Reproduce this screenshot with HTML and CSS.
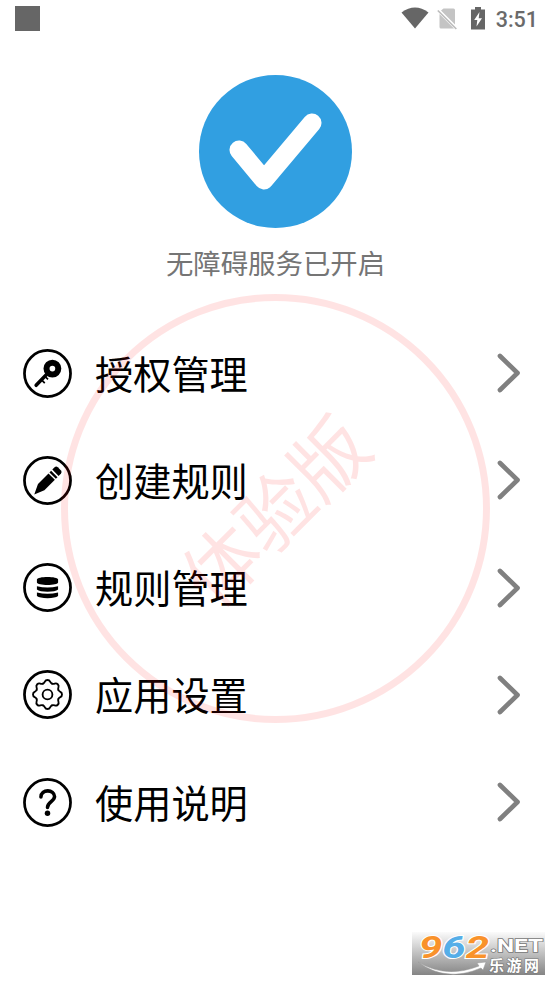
FILE: index.html
```html
<!DOCTYPE html>
<html lang="zh-CN">
<head>
<meta charset="utf-8">
<title>无障碍服务</title>
<link rel="stylesheet" href="styles.css">
</head>
<body>
<div class="screen">
  <header class="status-bar">
    <span class="notice"></span>
    <div class="status-icons">
      <svg class="wifi" width="28" height="22" viewBox="0 0 28 22"><path d="M.5 5.500Q14-4.500 27.500 5.500L14 21.500Z"/></svg>
      <svg class="sim" width="20" height="22" viewBox="0 0 20 22"><path d="M6.500 .5H16.500Q18 .5 18 2V16.500L4 2.500ZM2.500 6L17 20.500H4Q2.500 20.500 2.500 19Z"/><path class="slash" d="M.8 2.500L19.300 21"/></svg>
      <svg class="battery" width="14" height="23" viewBox="0 0 14 23"><path d="M4 0H10V2.500H14V22.500H0V2.500H4Z"/><path class="bolt" d="M8.500 5L3.200 13H6.300L5.500 19.500L11 11.200H7.700Z"/></svg>
      <span class="clock">3:51</span>
    </div>
  </header>

  <section class="service">
    <svg width="153" height="154" viewBox="0 0 153 154"><circle cx="76.500" cy="76.500" r="76.500"/><path d="M40 75L65 105L113 48"/></svg>
    <p>无障碍服务已开启</p>
  </section>

  <nav class="menu">
    <a class="row">
      <svg class="icon" viewBox="0 0 50 50"><circle class="ring" cx="25" cy="25" r="23.500"/><circle cx="30" cy="20" r="6" fill="none" stroke="#000" stroke-width="6.200"/><path d="M26 24L13.400 37" stroke="#000" stroke-width="3.600" stroke-linecap="round"/><path d="M18.500 31L22.200 34.700M22.500 28L25.500 31" stroke="#000" stroke-width="1.800"/></svg>
      <span>授权管理</span>
      <svg class="arrow" viewBox="0 0 24 40"><path d="M3 3L20.500 20L3 37"/></svg>
    </a>
    <a class="row">
      <svg class="icon" viewBox="0 0 50 50"><circle class="ring" cx="25" cy="25" r="23.500"/><path d="M11.500 39.300L15.300 28.500L26 17.800L32.500 24.300L21.800 35Z"/><path d="M27 16.800L28.700 15.100L35.200 21.600L33.500 23.300Z"/><path d="M29.900 13.900L32.500 11.300Q34 10.200 35.500 11.500L38.800 14.800Q40 16.300 38.800 17.900L36.300 20.400Z"/></svg>
      <span>创建规则</span>
      <svg class="arrow" viewBox="0 0 24 40"><path d="M3 3L20.500 20L3 37"/></svg>
    </a>
    <a class="row">
      <svg class="icon" viewBox="0 0 50 50"><circle class="ring" cx="25" cy="25" r="23.500"/><path d="M14.200 17C14.200 13.500 35.800 13.500 35.800 17V20C35.800 23.300 14.200 23.300 14.200 20Z"/><path d="M14.200 23.700Q25 26.500 35.800 23.700V27Q33 29.300 25 29.300T14.200 27Z"/><path d="M14.200 30Q25 33 35.800 30V33.800Q33 36 25 36T14.200 33.800Z"/></svg>
      <span>规则管理</span>
      <svg class="arrow" viewBox="0 0 24 40"><path d="M3 3L20.500 20L3 37"/></svg>
    </a>
    <a class="row">
      <svg class="icon" viewBox="0 0 50 50"><circle class="ring" cx="25" cy="25" r="23.500"/>
        <defs><path id="tooth" d="M-4.600-11.100C-1.800-12.300-3.500-14.800 0-14.800S1.800-12.300 4.600-11.100"/></defs>
        <g transform="translate(25 25)" fill="none" stroke="#000" stroke-width="1.900" stroke-linecap="round"><circle r="5"/><use href="#tooth"/><use href="#tooth" transform="rotate(45)"/><use href="#tooth" transform="rotate(90)"/><use href="#tooth" transform="rotate(135)"/><use href="#tooth" transform="rotate(180)"/><use href="#tooth" transform="rotate(225)"/><use href="#tooth" transform="rotate(270)"/><use href="#tooth" transform="rotate(315)"/></g></svg>
      <span>应用设置</span>
      <svg class="arrow" viewBox="0 0 24 40"><path d="M3 3L20.500 20L3 37"/></svg>
    </a>
    <a class="row">
      <svg class="icon" viewBox="0 0 50 50"><circle class="ring" cx="25" cy="25" r="23.500"/><path d="M18.300 19.500C18.300 11 32.200 11.200 32.200 19C32.200 24 25 24.500 25 30" fill="none" stroke="#000" stroke-width="3.600" stroke-linecap="round"/><circle cx="25" cy="36" r="2.800"/></svg>
      <span>使用说明</span>
      <svg class="arrow" viewBox="0 0 24 40"><path d="M3 3L20.500 20L3 37"/></svg>
    </a>
  </nav>

  <div class="watermark"><span>体验版</span></div>

  <div class="site-badge">
    <svg width="133" height="43" viewBox="0 0 133 43">
      <path class="swoosh" d="M6 30Q34 47 67 34L65 31L74 30L71 38L69 36Q34 51 6 30Z"/>
      <text class="digits" x="7" y="25.500" textLength="70" lengthAdjust="spacingAndGlyphs"><tspan>9</tspan><tspan class="blue">6</tspan><tspan>2</tspan></text>
      <text class="net" x="78" y="20" textLength="53" lengthAdjust="spacingAndGlyphs">.NET</text>
      <text class="site-name" x="77" y="38.500" textLength="50">乐游网</text>
    </svg>
  </div>
</div>
</body>
</html>
```
FILE: styles.css
```css
* { box-sizing: border-box; }

body {
  margin: 0;
  background: #fff;
  color: #000;
  font-family: Roboto, "Noto Sans CJK SC", sans-serif;
}

.screen {
  position: relative;
  width: 551px;
  height: 981px;
  overflow: hidden;
}

.status-bar {
  display: flex;
  justify-content: space-between;
  align-items: flex-start;
  height: 75px;
  padding: 6px 13px 0 15px;
}

.notice {
  width: 25px;
  height: 25px;
  background: #666;
}

.status-icons {
  display: flex;
  align-items: flex-start;
  fill: #666;
}

.wifi { margin-top: 1px; }
.sim { margin: 2px 0 0 8px; fill: #c4c4c4; }
.slash { fill: none; stroke: #bbb; stroke-width: 1.6; }
.battery { margin: 1px 0 0 14px; }
.bolt { fill: #fff; }

.clock {
  margin-left: 11px;
  color: #6a6a6a;
  font-size: 21.5px;
  font-weight: 500;
  line-height: 27px;
}

.service {
  display: flex;
  flex-direction: column;
  align-items: center;
  height: 244.5px;
}

.service svg { display: block; fill: #319fe1; }

.service path {
  fill: none;
  stroke: #fff;
  stroke-width: 19;
  stroke-linecap: round;
  stroke-linejoin: round;
}

.service p {
  margin: 16px 0 0;
  color: #757575;
  font-size: 27.4px;
  line-height: 40px;
  white-space: nowrap;
}

.row {
  display: flex;
  align-items: center;
  height: 107.25px;
  padding: 0 30px 0 23px;
}

.icon { width: 49px; height: 49px; flex: none; }
.ring { fill: none; stroke: #000; stroke-width: 2.8; }

.row span {
  flex: 1;
  margin-left: 23px;
  padding-top: 5px;
  font-size: 38.2px;
  line-height: 56px;
}

.arrow { width: 24px; height: 40px; }

.arrow path {
  fill: none;
  stroke: #808080;
  stroke-width: 4.7;
  stroke-linecap: round;
  stroke-linejoin: round;
}

.watermark {
  position: absolute;
  left: 61px;
  top: 294px;
  display: flex;
  align-items: center;
  justify-content: center;
  width: 429px;
  height: 429px;
  border: 7px solid rgba(255, 0, 0, .11);
  border-radius: 50%;
}

.watermark span {
  color: rgba(255, 0, 0, .11);
  font-size: 75.5px;
  line-height: 110px;
  white-space: nowrap;
  transform: translate(2px, 4px) rotate(-45deg);
}

.site-badge {
  position: absolute;
  left: 412px;
  top: 932px;
  width: 133px;
  height: 43px;
  background: linear-gradient(#fbfbfb, #c6c6c6 45%, #858585);
}

.site-badge svg { display: block; }

.digits {
  font: italic 700 31px Roboto, sans-serif;
  fill: #f9922b;
  stroke: #fff;
  stroke-width: 2;
  paint-order: stroke;
}

.blue { fill: #55aee8; }

.net {
  font: 700 18px Roboto, sans-serif;
  fill: #fff;
  stroke: #777;
  stroke-width: 1.4;
  paint-order: stroke;
}

.site-name {
  font: 700 15px "Noto Sans CJK SC", sans-serif;
  fill: #fff;
  stroke: #777;
  stroke-width: 1.2;
  paint-order: stroke;
}

.swoosh { fill: #fff; stroke: #999; stroke-width: .5; }
```
